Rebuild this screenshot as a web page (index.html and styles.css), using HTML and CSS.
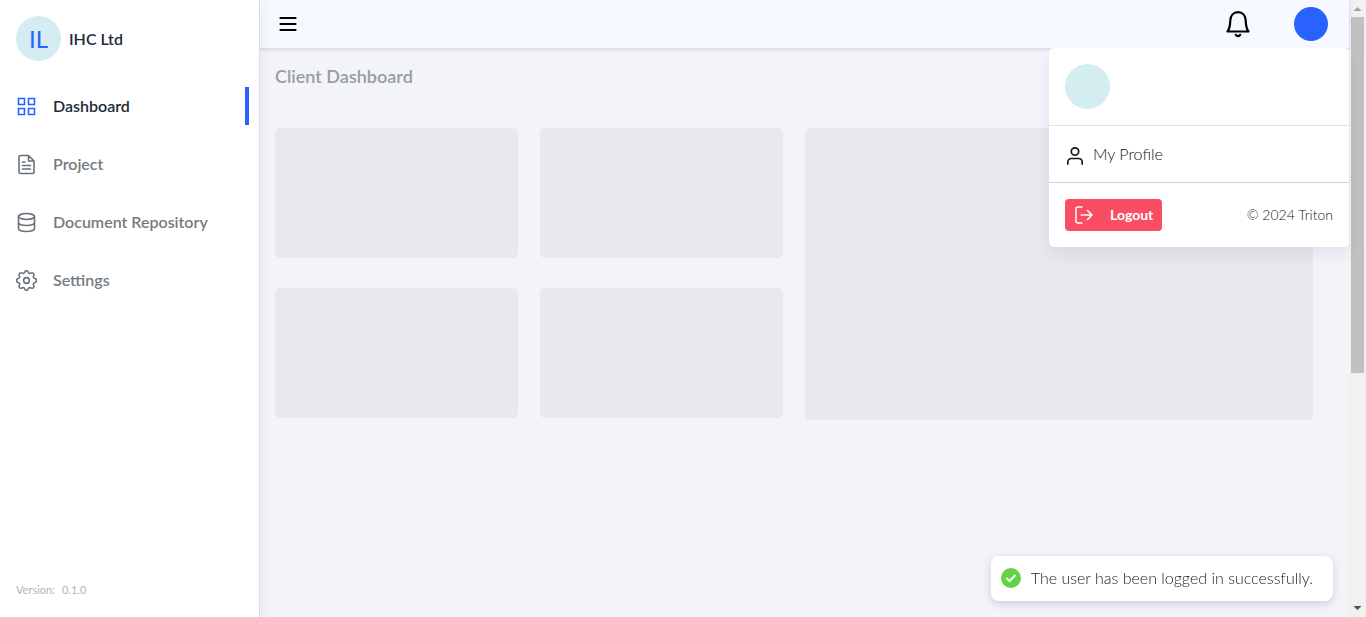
FILE: index.html
```html
<!DOCTYPE html>
<html lang="en">
<head>
<meta charset="utf-8">
<meta name="viewport" content="width=device-width, initial-scale=1">
<title>Client Dashboard</title>
<link rel="stylesheet" href="styles.css">
</head>
<body>
<div class="app">
  <aside class="sidebar">
    <div class="brand">
      <span class="avatar">IL</span>
      <span class="brand-name">IHC Ltd</span>
    </div>
    <nav class="menu">
      <a class="menu-item active" href="#dashboard">
        <svg class="menu-icon" viewBox="0 0 21 21"><path d="M2.500 2.500h6v6h-6zM12.500 2.500h6v6h-6zM2.500 12.500h6v6h-6zM12.500 12.500h6v6h-6z"/></svg>
        <span>Dashboard</span>
      </a>
      <a class="menu-item" href="#project">
        <svg class="menu-icon" viewBox="0 0 21 21"><path d="M12.500 1.500H4.500a1.500 1.500 0 0 0-1.500 1.500v15a1.500 1.500 0 0 0 1.500 1.500h12a1.500 1.500 0 0 0 1.500-1.500V7zM12.500 1.500V7H18M6.500 8h2.500M6.500 11.500h8M6.500 15h8"/></svg>
        <span>Project</span>
      </a>
      <a class="menu-item" href="#documents">
        <svg class="menu-icon" viewBox="0 0 21 21"><ellipse cx="10.500" cy="4.500" rx="8" ry="3"/><path d="M2.500 4.500v12c0 1.700 3.600 3 8 3s8-1.300 8-3v-12M2.500 10.500c0 1.700 3.600 3 8 3s8-1.300 8-3"/></svg>
        <span>Document Repository</span>
      </a>
      <a class="menu-item" href="#settings">
        <svg class="menu-icon" viewBox="1 1 22 22"><circle cx="12" cy="12" r="3"/><path d="M10.300 3c.5-1.700 2.900-1.700 3.400 0a1.900 1.900 0 0 0 2.900 1.200c1.800-1.200 4.100 1 2.900 2.800a1.900 1.900 0 0 0 1.300 3c2.200.5 2.200 3.500 0 4a1.900 1.900 0 0 0-1.300 3c1.200 1.800-1.100 4-2.900 2.800a1.900 1.900 0 0 0-2.900 1.200c-.5 1.700-2.900 1.700-3.400 0a1.900 1.900 0 0 0-2.900-1.200c-1.800 1.200-4.100-1-2.900-2.800a1.900 1.900 0 0 0-1.300-3c-2.200-.5-2.200-3.500 0-4a1.900 1.900 0 0 0 1.300-3c-1.200-1.800 1.100-4 2.900-2.800a1.900 1.900 0 0 0 2.900-1.200z"/></svg>
        <span>Settings</span>
      </a>
    </nav>
    <div class="version"><span>Version:</span><span>0.1.0</span></div>
  </aside>

  <div class="page">
    <header class="topbar">
      <button class="icon-button" type="button" aria-label="Toggle menu">
        <svg class="burger" viewBox="0 0 18 18"><path d="M1.500 3h15M1.500 9h15M1.500 15h15"/></svg>
      </button>
      <div class="topbar-actions">
        <button class="icon-button" type="button" aria-label="Notifications">
          <svg class="bell" viewBox="0 0 24 28"><path d="M1.500 21.500C4 18.500 4 16 4.300 10.500 4.500 5.500 7.500 2.200 12 2.200s7.500 3.300 7.700 8.300c.3 5.500.3 8 2.800 11zM9.800 24.800c.9 1.700 3.500 1.700 4.400 0"/></svg>
        </button>
        <div class="account">
          <button class="account-button" type="button" aria-label="Account"></button>
          <section class="account-menu">
            <div class="account-head"><span class="avatar"></span></div>
            <a class="profile" href="#profile">
              <svg class="profile-icon" viewBox="0 0 20 20"><circle cx="10" cy="5.500" r="3.700"/><path d="M2.800 18v-2a3.500 3.500 0 0 1 3.500-3.500h7.400a3.500 3.500 0 0 1 3.500 3.500v2"/></svg>
              <span>My Profile</span>
            </a>
            <div class="account-foot">
              <button class="logout" type="button">
                <svg class="logout-icon" viewBox="0 0 20 20"><path d="M8 2H4a2 2 0 0 0-2 2v12a2 2 0 0 0 2 2h4M7 10h11M13.500 5.500 18 10l-4.500 4.500"/></svg>
                <span>Logout</span>
              </button>
              <span class="copyright">© 2024 Triton</span>
            </div>
          </section>
        </div>
      </div>
    </header>
    <main class="content">
      <h1 class="title">Client Dashboard</h1>
      <div class="cards">
        <div class="card"></div>
        <div class="card"></div>
        <div class="card card-large"></div>
        <div class="card"></div>
        <div class="card"></div>
      </div>
    </main>
  </div>

  <div class="scrollbar" aria-hidden="true">
    <svg class="scroll-arrow scroll-up" viewBox="0 0 17 17"><path d="M4.500 11h8l-4-4z"/></svg>
    <div class="scroll-track"><div class="scroll-thumb"></div></div>
    <svg class="scroll-arrow scroll-down" viewBox="0 0 17 17"><path d="M4.500 6h8l-4 4z"/></svg>
  </div>
</div>

<div class="toast" role="status">
  <svg class="toast-icon" viewBox="0 0 20 20"><circle cx="10" cy="10" r="10"/><path d="m6 10.500 2.500 2.500L14 7.500"/></svg>
  <span>The user has been logged in successfully.</span>
</div>
</body>
</html>
```
FILE: styles.css
```css
* {
  box-sizing: border-box;
}

body {
  margin: 0;
  font-family: Lato, "Liberation Sans", sans-serif;
  font-size: 16px;
  line-height: 24px;
  color: #212b36;
  background: #f3f4fa;
}

a {
  color: inherit;
  text-decoration: none;
}

button {
  padding: 0;
  border: 0;
  background: none;
  font: inherit;
  cursor: pointer;
}

svg {
  display: block;
  flex: none;
  fill: none;
  stroke: currentColor;
  stroke-linecap: round;
  stroke-linejoin: round;
}

.app {
  display: flex;
  height: 100vh;
}

.sidebar {
  position: relative;
  z-index: 2;
  display: flex;
  flex: none;
  flex-direction: column;
  width: 260px;
  padding: 16px 10px 16px 0;
  border-right: 1px solid #dcdde3;
  background: #fff;
  box-shadow: 2px 0 12px rgba(40, 45, 80, 0.06);
}

.brand {
  display: flex;
  align-items: center;
  gap: 8px;
  padding-left: 16px;
  font-weight: 600;
}

.avatar {
  display: flex;
  align-items: center;
  justify-content: center;
  width: 45px;
  height: 45px;
  border-radius: 50%;
  background: #d4edf1;
  color: #2962ff;
  font-size: 24px;
  font-weight: 400;
}

.menu {
  display: flex;
  flex-direction: column;
  gap: 20px;
  margin-top: 26px;
}

.menu-item {
  display: flex;
  align-items: center;
  gap: 16px;
  height: 38px;
  padding-left: 16px;
  border-right: 4px solid transparent;
  color: #747b83;
  font-weight: 600;
}

.menu-item.active {
  border-right-color: #2962ff;
  color: #212b36;
}

.menu-icon {
  width: 21px;
  height: 21px;
  stroke: #69717a;
  stroke-width: 1.6;
}

.active .menu-icon {
  stroke: #2962ff;
  stroke-linejoin: miter;
}

.version {
  display: flex;
  gap: 7px;
  margin-top: auto;
  padding-left: 16px;
  color: #adb5bd;
  font-size: 11px;
  line-height: 22px;
}

.page {
  flex: 1;
  min-width: 0;
}

.topbar {
  position: relative;
  z-index: 1;
  display: flex;
  align-items: center;
  justify-content: space-between;
  height: 48px;
  padding: 0 21px 0 19px;
  background: #f6f9ff;
  box-shadow: 0 1px 4px rgba(40, 45, 60, 0.18);
}

.icon-button {
  color: #000;
}

.burger {
  width: 18px;
  height: 18px;
  stroke-width: 2.2;
}

.bell {
  width: 24px;
  height: 28px;
  stroke-width: 2.2;
}

.topbar-actions {
  display: flex;
  align-items: center;
  gap: 44px;
}

.account-button {
  display: block;
  width: 34px;
  height: 34px;
  border-radius: 50%;
  background: #2962ff;
}

.account-menu {
  position: absolute;
  top: 48px;
  right: 0;
  width: 300px;
  border-radius: 5px;
  background: #fff;
  box-shadow: 0 8px 16px rgba(40, 45, 60, 0.08);
}

.account-head {
  padding: 16px;
  border-bottom: 1px solid #dee2e6;
}

.profile {
  display: flex;
  align-items: center;
  gap: 8px;
  padding: 16px;
  border-bottom: 1px solid #ced0d2;
  color: #101820;
  font-weight: 300;
}

.profile-icon {
  width: 20px;
  height: 20px;
  margin-top: 4px;
  stroke-width: 1.7;
}

.account-foot {
  display: flex;
  align-items: center;
  justify-content: space-between;
  padding: 16px;
  font-size: 14px;
}

.logout {
  display: flex;
  align-items: center;
  gap: 16px;
  height: 32px;
  padding: 0 9px;
  border-radius: 4px;
  background: #f94d63;
  color: #fff;
  font-weight: 700;
}

.logout-icon {
  width: 20px;
  height: 20px;
  stroke-width: 1.5;
}

.copyright {
  color: #101820;
  font-weight: 300;
}

.content {
  padding: 16px 36px 24px 15px;
}

.title {
  margin: 0;
  color: #979da3;
  font-size: 18px;
  font-weight: 600;
  line-height: 24px;
}

.cards {
  display: grid;
  grid-template-columns: repeat(4, 1fr);
  grid-auto-rows: 130px;
  gap: 30px 22px;
  margin-top: 40px;
}

.card {
  border-radius: 5px;
  background: #e8e9ed;
}

.card-large {
  grid-column: span 2;
  grid-row: span 2;
  min-height: 292px;
}

.scrollbar {
  display: flex;
  flex: none;
  flex-direction: column;
  width: 17px;
  background: #f1f1f1;
}

.scroll-arrow {
  width: 17px;
  height: 17px;
  stroke: none;
}

.scroll-up {
  fill: #a3a3a3;
}

.scroll-down {
  fill: #505050;
}

.scroll-track {
  flex: 1;
  padding: 0 2px;
}

.scroll-thumb {
  height: 61%;
  background: #c1c1c1;
}

.toast {
  position: fixed;
  z-index: 3;
  right: 33px;
  bottom: 16px;
  display: flex;
  align-items: center;
  gap: 10px;
  height: 45px;
  padding: 0 20px 2px 10px;
  border-radius: 8px;
  background: #fff;
  color: #222;
  font-weight: 300;
  box-shadow: 0 3px 8px rgba(40, 45, 60, 0.18);
}

.toast-icon {
  width: 20px;
  height: 20px;
  stroke: #fff;
  stroke-width: 2;
}

.toast-icon circle {
  fill: #61d345;
  stroke: none;
}
```
